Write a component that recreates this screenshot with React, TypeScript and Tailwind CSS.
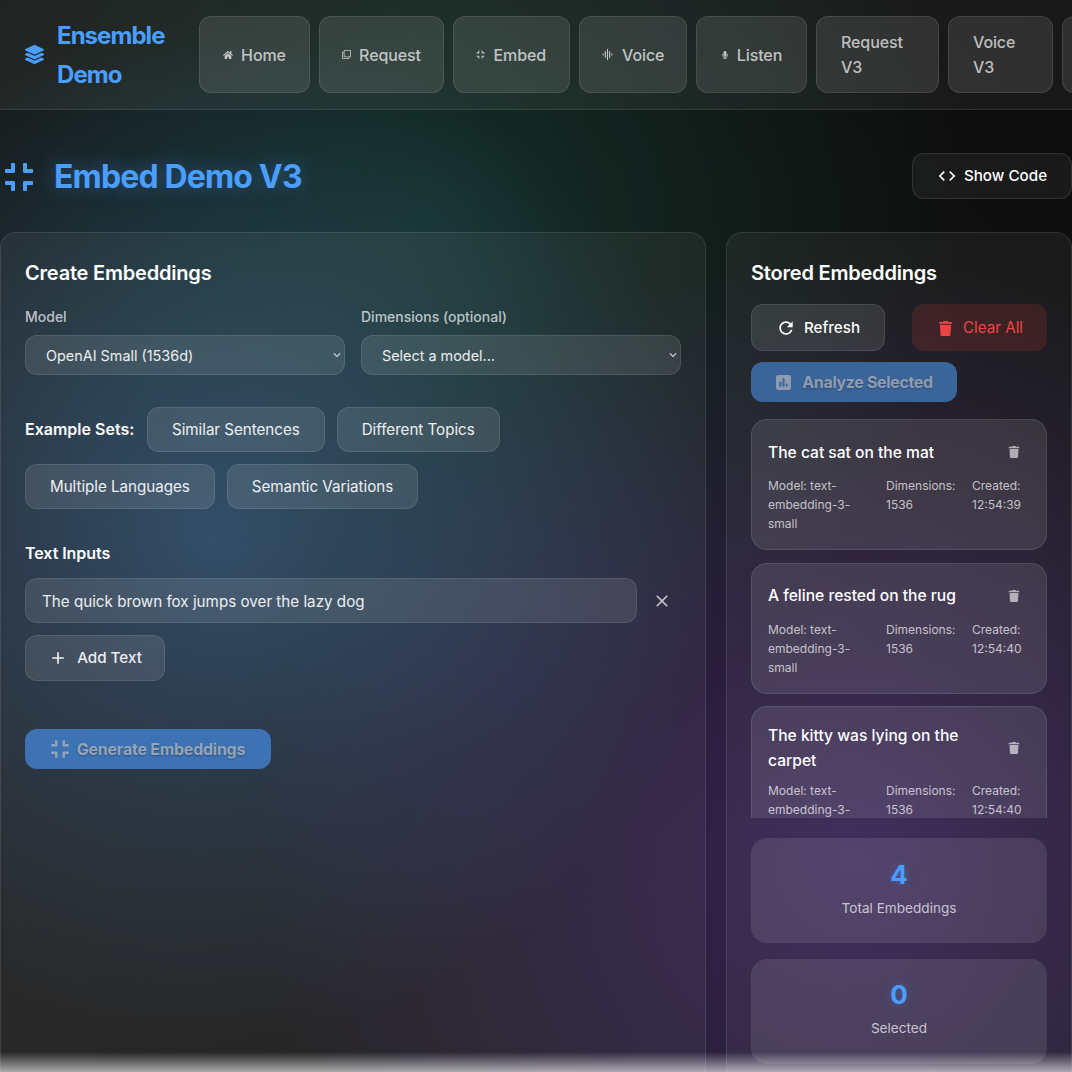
import React from "react";
import { FaCompress, FaHome, FaLayerGroup, FaMicrophone, FaRegClone, FaTrash } from "react-icons/fa";
import { FaSquarePollVertical } from "react-icons/fa6";
import { MdAdd, MdClose, MdCode, MdGraphicEq, MdKeyboardArrowDown, MdRefresh } from "react-icons/md";

const navItems = [
  { label: "Home", icon: <FaHome className="text-[10px]" />, width: "w-[111px]" },
  { label: "Request", icon: <FaRegClone className="text-[9px]" />, width: "w-[125px]" },
  { label: "Embed", icon: <FaCompress className="text-[9px]" />, width: "w-[116.5px]" },
  { label: "Voice", icon: <MdGraphicEq className="text-[13px]" />, width: "w-[108.5px]" },
  { label: "Listen", icon: <FaMicrophone className="text-[8px]" />, width: "w-[111px]" },
];

const embeddings = [
  { text: "The cat sat on the mat", created: "12:54:39" },
  { text: "A feline rested on the rug", created: "12:54:40" },
  { text: "The kitty was lying on the carpet", created: "12:54:40" },
  { text: "A dog slept on the sofa", created: "12:54:41" },
];

const chipClass =
  "h-[45px] px-6 pt-px rounded-xl border border-white/10 bg-white/10 text-white/90 text-[15.2px] tracking-[-0.04px] flex items-center";

const Select = ({ value }: { value: string }) => (
  <div className="relative">
    <select
      defaultValue={value}
      className="w-full h-10 pl-5 pr-8 pt-[3px] appearance-none rounded-xl border border-white/10 bg-white/10 text-white/90 text-[14.4px] font-normal"
    >
      <option className="text-black">{value}</option>
    </select>
    <MdKeyboardArrowDown className="absolute right-[1px] top-[13px] text-white/80 text-sm" />
  </div>
);

const App: React.FC = () => {
  return (
    <div className="relative h-[1072px] overflow-hidden text-white font-['Inter',sans-serif] bg-[radial-gradient(circle_at_20%_50%,rgba(74,158,255,0.3),transparent_50%),radial-gradient(circle_at_80%_80%,rgba(130,70,235,0.3),transparent_50%),radial-gradient(circle_at_40%_20%,rgba(30,190,150,0.16),transparent_50%),linear-gradient(45deg,#1e1e1e,#0c0c0c)]">
      {/* Top bar */}
      <header className="h-[110px] flex items-center gap-[9px] border-b border-white/10 bg-white/5 pl-[25px] overflow-hidden">
        <div className="w-[165px] shrink-0 flex items-center gap-[13px]">
          <FaLayerGroup className="text-[#4a9eff] text-[19px] shrink-0" />
          <span className="w-[112px] text-[24px] leading-[39px] font-bold tracking-[-0.95px] text-[#4a9eff]">Ensemble Demo</span>
        </div>
        {navItems.map((item) => (
          <div
            key={item.label}
            className={`${item.width} shrink-0 h-[77px] rounded-xl border border-white/10 bg-white/10 flex items-center justify-center gap-2 text-base font-medium tracking-[-0.1px] text-white/70`}
          >
            {item.icon}
            {item.label}
          </div>
        ))}
        <div className="w-[123px] shrink-0 h-[77px] rounded-xl border border-white/10 bg-white/10 pl-6 flex items-center text-base leading-[25px] font-medium tracking-[-0.1px] text-white/70">
          <span className="w-12">Request V3</span>
        </div>
        <div className="w-[104.5px] shrink-0 h-[77px] rounded-xl border border-white/10 bg-white/10 pl-6 flex items-center text-base leading-[25px] font-medium tracking-[-0.1px] text-white/70">
          <span className="w-10">Voice V3</span>
        </div>
        <div className="w-[100px] shrink-0 h-[77px] rounded-xl border border-white/10 bg-white/10" />
      </header>

      {/* Title row */}
      <div className="h-[122px] flex items-center justify-between pl-[3px] pt-[12px]">
        <h1 className="flex items-center gap-[19px] text-[32px] font-bold tracking-[-0.85px] text-[#4a9eff] [text-shadow:0_0_20px_rgba(74,158,255,0.4)]">
          <FaCompress className="text-[32px]" />
          Embed Demo V3
        </h1>
        <button className="w-[160px] h-[46px] mb-[2px] rounded-xl border border-white/10 bg-white/5 flex items-center justify-center gap-[7px] text-[15.2px] font-medium">
          <MdCode className="text-[20px]" />
          Show Code
        </button>
      </div>

      <div className="flex gap-5">
        {/* Create panel */}
        <section className="w-[706px] h-[900px] shrink-0 rounded-2xl border border-white/10 bg-white/5 p-6">
          <h2 className="text-xl font-semibold tracking-[-0.2px] leading-[32px]">Create Embeddings</h2>
          <div className="flex gap-4 mt-[19px]">
            <label className="w-[320px] text-sm font-medium text-white/70">
              <div className="mb-[10px] leading-[17px]">Model</div>
              <Select value="OpenAI Small (1536d)" />
            </label>
            <label className="w-[320px] text-sm font-medium text-white/70">
              <div className="mb-[10px] leading-[17px]">Dimensions (optional)</div>
              <Select value="Select a model..." />
            </label>
          </div>
          <div className="flex flex-wrap items-center gap-3 mt-8">
            <span className="font-semibold text-base pb-px w-[110px]">Example Sets:</span>
            <button className={chipClass}>Similar Sentences</button>
            <button className={chipClass}>Different Topics</button>
            <button className={chipClass}>Multiple Languages</button>
            <button className={chipClass}>Semantic Variations</button>
          </div>
          <div className="mt-[32px] font-semibold text-base leading-[24px] tracking-[-0.05px]">Text Inputs</div>
          <div className="flex items-center gap-[15px] mt-[13px]">
            <input
              readOnly
              value="The quick brown fox jumps over the lazy dog"
              className="w-[612px] h-[45px] rounded-xl border border-white/10 bg-white/10 px-4 pt-px text-[15.2px] text-white/90"
            />
            <MdClose className="text-white/70 text-[20px]" />
          </div>
          <button className="mt-3 w-[140px] h-[46px] rounded-xl border border-white/10 bg-white/10 flex items-center justify-center gap-[9px] text-[15.2px] font-medium text-white/90">
            <MdAdd className="text-[20px]" />
            Add Text
          </button>
          <button className="mt-12 w-[246px] h-10 pb-px pr-px rounded-xl bg-[#3d72b4] flex items-center justify-center gap-[7px] text-base font-bold tracking-[-0.25px] text-[#94a3b8] [text-shadow:0_1px_2px_rgba(0,0,0,0.3)]">
            <FaCompress className="text-[20px]" />
            Generate Embeddings
          </button>
        </section>

        {/* Stored panel */}
        <aside className="w-[346px] h-[900px] shrink-0 rounded-2xl border border-white/10 bg-white/5 p-6">
          <h2 className="text-xl font-semibold tracking-[-0.2px] leading-[32px]">Stored Embeddings</h2>
          <div className="flex justify-between mt-[15px]">
            <button className="w-[134px] h-[47px] pt-px rounded-xl border border-white/10 bg-white/10 flex items-center justify-center gap-2 text-[15.2px] font-medium">
              <MdRefresh className="text-[20px]" />
              Refresh
            </button>
            <button className="w-[135px] h-[47px] pt-px pl-[2px] rounded-xl bg-[#ef4444]/15 flex items-center justify-center gap-2.5 text-[15.2px] text-[#ef4444]">
              <FaTrash className="text-[15px]" />
              Clear All
            </button>
          </div>
          <button className="mt-[11px] w-[206px] h-10 rounded-xl bg-[#3a659b] flex items-center justify-center gap-2.5 text-base font-bold tracking-[-0.35px] text-[#8f9cb0] [text-shadow:0_1px_2px_rgba(0,0,0,0.3)]">
            <FaSquarePollVertical className="text-[17px]" />
            Analyze Selected
          </button>
          <div className="mt-[17px] h-[399px] overflow-hidden flex flex-col gap-[12.5px]">
            {embeddings.map((e) => (
              <div key={e.text} className="shrink-0 rounded-2xl border border-white/10 bg-white/10 p-4">
                <div className="flex items-center justify-between min-h-8">
                  <div className="text-[15.6px] font-medium leading-[25px] w-[215px]">{e.text}</div>
                  <FaTrash className="text-white/60 text-[12px] mr-[10px]" />
                </div>
                <div className="flex text-xs leading-[19px] text-white/70 mt-[8px]">
                  <div className="w-[100px] mr-[18px]">Model: text-embedding-3-small</div>
                  <div className="w-[86px]">Dimensions: 1536</div>
                  <div className="w-[58px]">Created: {e.created}</div>
                </div>
              </div>
            ))}
          </div>
          <div className="mt-[20px] h-[105px] pb-0.5 rounded-2xl bg-white/10 flex flex-col items-center justify-center">
            <div className="text-[26px] font-bold text-[#4a9eff] leading-[30px] [text-shadow:0_0_10px_rgba(74,158,255,0.3)]">4</div>
            <div className="mt-2 text-[13.6px] text-white/70">Total Embeddings</div>
          </div>
          <div className="mt-4 h-[105px] pb-1 rounded-2xl bg-white/10 flex flex-col items-center justify-center">
            <div className="text-[26px] font-bold text-[#4a9eff] leading-[30px] [text-shadow:0_0_10px_rgba(74,158,255,0.3)]">0</div>
            <div className="mt-2 text-[13.6px] text-white/70">Selected</div>
          </div>
        </aside>
      </div>

      {/* Glow along the bottom edge */}
      <div className="absolute inset-x-0 bottom-0 h-5 bg-gradient-to-t from-white/60 to-transparent" />
    </div>
  );
};

export default App;
